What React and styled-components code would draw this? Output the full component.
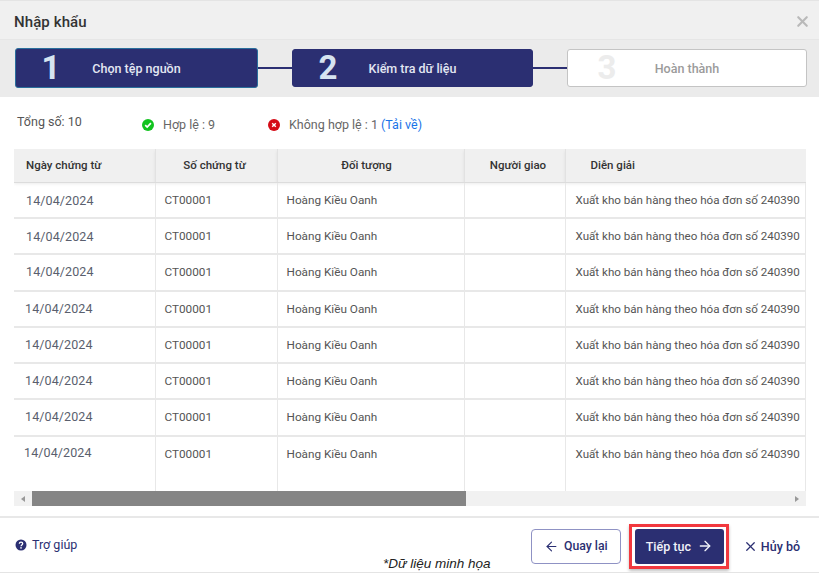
import styled, { createGlobalStyle } from 'styled-components'
import { ArrowLeft, ArrowRight, X } from 'lucide-react'

const rows = [
	{ height: 36, dateLeft: 12, dateTop: 10 },
	{ height: 36, dateLeft: 12, dateTop: 10 },
	{ height: 37, dateLeft: 12, dateTop: 9 },
	{ height: 36, dateLeft: 11, dateTop: 9 },
	{ height: 36, dateLeft: 11, dateTop: 9 },
	{ height: 36, dateLeft: 11, dateTop: 9 },
	{ height: 37, dateLeft: 11, dateTop: 9 },
	{ height: 55, dateLeft: 10, dateTop: 8 },
]

export default function App() {
	return (
		<Dialog>
			<GlobalStyle />
			<Header>
				<Title>Nhập khẩu</Title>
				<CloseButton>
					<X size={17} strokeWidth={3} />
				</CloseButton>
			</Header>
			<Stepper>
				<Step $active $first $width={243}>
					<StepNumber $width={70}>1</StepNumber>
					<StepLabel $inset={70}>Chọn tệp nguồn</StepLabel>
				</Step>
				<Connector />
				<Step $active $width={241}>
					<StepNumber $width={70}>2</StepNumber>
					<StepLabel $inset={70}>Kiểm tra dữ liệu</StepLabel>
				</Step>
				<Connector />
				<Step $width={240}>
					<StepNumber $width={78}>3</StepNumber>
					<StepLabel $inset={78}>Hoàn thành</StepLabel>
				</Step>
			</Stepper>
			<Stats>
				<Total>Tổng số: 10</Total>
				<StatGroup $width={126}>
					<StatusIcon viewBox='0 0 12 12'>
						<circle cx='6' cy='6' r='6' fill='#12c31f' />
						<path d='M3.2 6.2 5.2 8.1 8.9 4.2' fill='none' stroke='#fff' strokeWidth='1.7' />
					</StatusIcon>
					<span>Hợp lệ : 9</span>
				</StatGroup>
				<StatGroup>
					<StatusIcon viewBox='0 0 12 12'>
						<circle cx='6' cy='6' r='6' fill='#d50b16' />
						<path d='M4.2 4.2 7.8 7.8M7.8 4.2 4.2 7.8' fill='none' stroke='#fff' strokeWidth='1.4' />
					</StatusIcon>
					<span>
						Không hợp lệ : 1 <DownloadLink>(Tải về)</DownloadLink>
					</span>
				</StatGroup>
			</Stats>
			<TableWrap>
				<Table>
					<colgroup>
						<col style={{ width: 141 }} />
						<col style={{ width: 122 }} />
						<col style={{ width: 187 }} />
						<col style={{ width: 101 }} />
						<col />
					</colgroup>
					<thead>
						<tr>
							<HeadCell $align='left' $pad={12}>Ngày chứng từ</HeadCell>
							<HeadCell $padRight={3}>Số chứng từ</HeadCell>
							<HeadCell $padRight={8}>Đối tượng</HeadCell>
							<HeadCell $pad={7}>Người giao</HeadCell>
							<HeadCell $align='left' $pad={25}>Diễn giải</HeadCell>
						</tr>
					</thead>
					<tbody>
						{rows.map((row, i) => (
							<Row key={i} $height={row.height}>
								<DateCell $left={row.dateLeft} $top={row.dateTop}>14/04/2024</DateCell>
								<Cell>CT00001</Cell>
								<Cell>Hoàng Kiều Oanh</Cell>
								<Cell />
								<NoteCell>Xuất kho bán hàng theo hóa đơn số 240390</NoteCell>
							</Row>
						))}
					</tbody>
				</Table>
				<Scrollbar>
					<ScrollArrow $side='left' />
					<ScrollThumb />
					<ScrollArrow $side='right' />
				</Scrollbar>
			</TableWrap>
			<Footer>
				<HelpLink>
					<HelpIcon viewBox='0 0 12 12'>
						<circle cx='6' cy='6' r='5.5' fill='#2b2f72' />
						<path d='M4.3 4.7C4.4 3.7 5.1 3.1 6 3.1 7 3.1 7.7 3.8 7.7 4.6 7.7 5.9 6 5.9 6 7.2' fill='none' stroke='#fff' strokeWidth='1.3' />
						<circle cx='6' cy='8.9' r='.8' fill='#fff' />
					</HelpIcon>
					Trợ giúp
				</HelpLink>
				<Actions>
					<BackButton>
						<ArrowLeft size={15} strokeWidth={1.8} />
						Quay lại
					</BackButton>
					<NextHighlight>
						<NextButton>
							Tiếp tục
							<ArrowRight size={16} strokeWidth={2} />
						</NextButton>
					</NextHighlight>
					<CancelButton>
						<X size={15} strokeWidth={2} />
						Hủy bỏ
					</CancelButton>
				</Actions>
				<Caption>*Dữ liệu minh họa</Caption>
			</Footer>
		</Dialog>
	)
}

const GlobalStyle = createGlobalStyle`
	html, body {
		margin: 0;
		padding: 0;
		background: #fff;
	}
	body {
		font-family: Roboto, "Liberation Sans", sans-serif;
	}
`

const Dialog = styled.div`
	position: relative;
	width: 819px;
	height: 573px;
	box-sizing: border-box;
	overflow: hidden;
	background: #fff;
	border-top: 1px solid #e4e4e4;
	border-bottom: 1px solid #e4e4e4;
	display: flex;
	flex-direction: column;
`

const Header = styled.div`
	height: 38px;
	flex: none;
	background: #f0f0f0;
	display: flex;
	align-items: center;
	justify-content: space-between;
	padding: 3px 8px 0 14px;
	box-sizing: border-box;
`

const Title = styled.div`
	font-size: 15px;
	font-weight: 500;
	color: #333;
	letter-spacing: 0.1px;
`

const CloseButton = styled.div`
	display: flex;
	color: #b9b9b9;
`

const Stepper = styled.div`
	height: 58px;
	flex: none;
	background: #ebebeb;
	border-top: 1px solid #e6e6e6;
	box-sizing: border-box;
	display: flex;
	align-items: center;
	padding: 0 12px 1px 15px;
`

const Step = styled.div`
	width: ${p => p.$width}px;
	height: ${p => (p.$first ? 40 : 38)}px;
	flex: none;
	box-sizing: border-box;
	border-radius: 3px;
	display: flex;
	align-items: center;
	background: ${p => (p.$active ? '#2b2f72' : '#fff')};
	border: 1px solid ${p => (p.$first ? '#2a6f9c' : p.$active ? '#2b2f72' : '#c4c4c4')};
	--number-color: ${p => (p.$active ? '#d6e4f0' : '#ececec')};
	--label-color: ${p => (p.$active ? '#e3e7f2' : '#9b9b9b')};
`

const StepNumber = styled.div`
	width: ${p => p.$width}px;
	flex: none;
	text-align: center;
	font-size: 33px;
	font-weight: 700;
	line-height: 36px;
	color: var(--number-color);
`

const StepLabel = styled.div`
	flex: 1;
	padding: 1px ${p => p.$inset}px 0 0;
	text-align: center;
	font-size: 12.5px;
	font-weight: 500;
	color: var(--label-color);
`

const Connector = styled.div`
	flex: 1;
	height: 2px;
	background: #2b2f72;
`

const Stats = styled.div`
	height: 52px;
	flex: none;
	display: flex;
	align-items: center;
	padding: 3px 0 0 17px;
	box-sizing: border-box;
	font-size: 12.5px;
	color: #666;
`

const Total = styled.div`
	width: 125px;
	margin-top: -7px;
	color: #555;
`

const StatGroup = styled.div`
	width: ${p => (p.$width ? `${p.$width}px` : 'auto')};
	display: flex;
	align-items: center;
	gap: 9px;
`

const StatusIcon = styled.svg`
	width: 12px;
	height: 12px;
	flex: none;
`

const DownloadLink = styled.span`
	color: #1a73e8;
`

const TableWrap = styled.div`
	margin-left: 14px;
	width: 792px;
	height: 357px;
	flex: none;
	overflow: hidden;
	display: flex;
	flex-direction: column;
`

const Table = styled.table`
	width: 792px;
	table-layout: fixed;
	border-collapse: collapse;
	font-size: 12px;
`

const HeadCell = styled.th`
	height: 33px;
	padding: 0 ${p => p.$padRight || 0}px 0 ${p => p.$pad || 0}px;
	box-sizing: border-box;
	background: #f0f0f0;
	border-right: 1px solid #e2e2e2;
	border-bottom: 1px solid #dcdcdc;
	box-shadow: 0 2px 3px rgba(0, 0, 0, 0.08);
	text-align: ${p => p.$align || 'center'};
	font-size: 11.5px;
	font-weight: 500;
	color: #333;

	&:last-child {
		border-right: none;
	}
`

const Row = styled.tr`
	height: ${p => p.$height}px;
	border-bottom: 2px solid #e8e8e8;

	&:last-child {
		border-bottom: none;
	}
`

const Cell = styled.td`
	padding: 9px 0 0 9px;
	vertical-align: top;
	border-right: 1px solid #e8e8e8;
	font-size: 11.75px;
	line-height: 16px;
	color: #555;
	white-space: nowrap;
	overflow: hidden;
`

const NoteCell = styled(Cell)`
	padding-left: 10px;
	font-size: 11.6px;
`

const DateCell = styled(Cell)`
	padding: ${p => p.$top}px 0 0 ${p => p.$left}px;
	font-size: 12.5px;
	color: #5a5f6e;
	letter-spacing: 0.1px;
`

const Scrollbar = styled.div`
	height: 15px;
	flex: none;
	margin-top: auto;
	background: #f1f1f1;
	display: flex;
	align-items: center;
`

const ScrollArrow = styled.div`
	width: 18px;
	height: 15px;
	flex: none;
	display: flex;
	align-items: center;
	justify-content: center;

	&::before {
		content: '';
		border-top: 3px solid transparent;
		border-bottom: 3px solid transparent;
		${p => (p.$side === 'left' ? 'border-right: 4px solid #999;' : 'border-left: 4px solid #999;')}
	}
`

const ScrollThumb = styled.div`
	width: 434px;
	height: 15px;
	flex: none;
	background: #858585;
	margin-right: auto;
`

const Footer = styled.div`
	position: relative;
	flex: 1;
	margin-top: 10px;
	border-top: 2px solid #e8e8e8;
	display: flex;
	align-items: center;
	justify-content: space-between;
	padding: 0 19px 0 15px;
`

const HelpLink = styled.div`
	display: flex;
	align-items: center;
	gap: 5px;
	font-size: 12.5px;
	color: #2b2f72;
	margin-top: -1px;
`

const HelpIcon = styled.svg`
	width: 12px;
	height: 12px;
`

const Actions = styled.div`
	display: flex;
	align-items: center;
	margin-top: 2px;
`

const BackButton = styled.div`
	width: 90px;
	height: 35px;
	box-sizing: border-box;
	border: 1px solid #8f92c4;
	border-radius: 4px;
	display: flex;
	align-items: center;
	justify-content: center;
	gap: 5px;
	font-size: 12.25px;
	font-weight: 500;
	color: #2b2f72;
`

const NextHighlight = styled.div`
	margin-left: 8px;
	padding: 2px 2px 2px 3px;
	border: 3px solid #f2383e;
	display: flex;
	box-shadow: 0 2px 3px rgba(0, 0, 0, 0.25);
`

const NextButton = styled.div`
	width: 89px;
	height: 35px;
	border-radius: 3px;
	background: #2b2f72;
	display: flex;
	align-items: center;
	justify-content: center;
	gap: 6px;
	font-size: 12.5px;
	font-weight: 500;
	color: #f0f2fa;
`

const CancelButton = styled.div`
	margin-left: 14px;
	display: flex;
	align-items: center;
	gap: 3px;
	font-size: 12.5px;
	font-weight: 500;
	color: #2b2f72;
`

const Caption = styled.div`
	position: absolute;
	left: 383px;
	bottom: 0;
	font-family: "Liberation Sans", sans-serif;
	font-size: 13.5px;
	font-style: italic;
	color: #222;
	line-height: 16px;
`
